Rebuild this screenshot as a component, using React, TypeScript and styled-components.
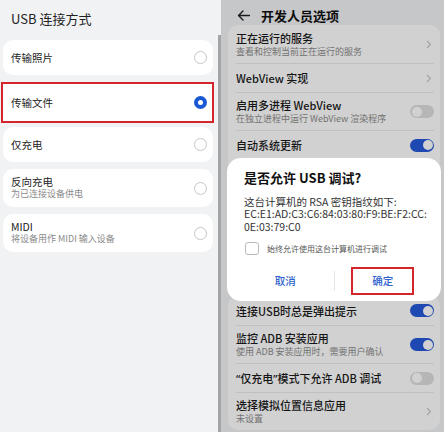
import React from "react";
import styled, { createGlobalStyle, css } from "styled-components";

const GlobalStyle = createGlobalStyle`
  html, body { margin: 0; padding: 0; }
  body {
    width: 444px; height: 432px; overflow: hidden;
    font-family: "Noto Sans CJK SC", "Noto Sans", sans-serif;
    background: #f1f2f4;
  }
  * { box-sizing: border-box; }
`;

const Page = styled.div`
  display: flex;
  width: 444px;
  height: 432px;
  overflow: hidden;
`;

/* ---------- left: USB mode ---------- */
const LeftPanel = styled.div`
  width: 221px;
  flex-shrink: 0;
  display: flex;
  background: #f1f2f4;
`;
const LeftContent = styled.div`
  flex: 1;
  display: flex;
  flex-direction: column;
`;
const LeftTitle = styled.div`
  height: 36px;
  padding-left: 11px;
  display: flex;
  align-items: center;
  font-size: 13px;
  color: #222;
`;
const OptionList = styled.div`
  display: flex;
  flex-direction: column;
  gap: 7px;
  padding: 4px 4px 0 3px;
`;
const OptionCard = styled.div<{ $tall?: boolean; $highlight?: boolean }>`
  display: flex;
  align-items: center;
  justify-content: space-between;
  height: ${(p) => (p.$tall ? 38 : 35)}px;
  padding: 0 6px 0 8px;
  background: #fff;
  border-radius: 10px;
  ${(p) =>
    p.$highlight &&
    css`
      height: 41px;
      margin: 0 -1px -3px -2px;
      border: 2px solid #d3252b;
      border-radius: 0;
      padding: 0 5px 0 8px;
    `}
`;
const OptionText = styled.div`
  display: flex;
  flex-direction: column;
`;
const OptionTitle = styled.div`
  font-size: 10.5px;
  line-height: 13px;
  color: #222;
`;
const OptionSub = styled.div`
  font-size: 9px;
  line-height: 12.5px;
  color: #8a8a8a;
`;
const Radio = styled.span<{ $checked?: boolean }>`
  width: 13px;
  height: 13px;
  flex-shrink: 0;
  border-radius: 50%;
  background: #fff;
  border: ${(p) => (p.$checked ? "4px solid #1b58d4" : "1px solid #c6c6c6")};
`;
const ScrollTrack = styled.div`
  width: 4px;
  padding-top: 35px;
  display: flex;
  justify-content: flex-end;
`;
const ScrollThumb = styled.div`
  width: 3px;
  background: #a4a4a6;
`;

/* ---------- right: developer options ---------- */
const RightPanel = styled.div`
  position: relative;
  flex: 1;
  display: flex;
  flex-direction: column;
  background: #f2f3f5;
  overflow: hidden;
`;
const Header = styled.div`
  height: 25px;
  padding: 7px 0 0 16px;
  display: flex;
  align-items: flex-start;
  gap: 11px;
`;
const HeaderTitle = styled.div`
  font-size: 13px;
  line-height: 18px;
  font-weight: 700;
  color: #111;
`;
const BackIcon = styled.svg`
  margin-top: 3px;
`;
const SettingsCard = styled.div<{ $gap?: number }>`
  margin: ${(p) => p.$gap ?? 0}px 4px 0 7px;
  background: #fff;
  border-radius: 10px;
  display: flex;
  flex-direction: column;
`;
const Row = styled.div<{ $tall?: boolean }>`
  height: ${(p) => (p.$tall ? 38 : 29)}px;
  margin: 0 6px 0 8px;
  display: flex;
  align-items: center;
  justify-content: space-between;
  & + & {
    border-top: 1px solid #ebebeb;
  }
`;
const CoveredRows = styled.div`
  height: 134px;
  margin: 0 6px 0 8px;
  border-top: 1px solid #ebebeb;
`;
const RowText = styled.div`
  display: flex;
  flex-direction: column;
`;
const RowTitle = styled.div`
  font-size: 11px;
  line-height: 14px;
  font-weight: 500;
  color: #1a1a1a;
  white-space: nowrap;
`;
const Quote = styled.span`
  font-family: "Noto Sans", "DejaVu Sans", sans-serif;
`;
const RowSub = styled.div`
  font-size: 9px;
  line-height: 13px;
  color: #8c8c8c;
  white-space: nowrap;
`;
const Toggle = styled.span<{ $on?: boolean }>`
  position: relative;
  width: 24px;
  height: 13px;
  flex-shrink: 0;
  border-radius: 7px;
  background: ${(p) => (p.$on ? "#2559d9" : "#dedede")};
  &::after {
    content: "";
    position: absolute;
    top: 1.5px;
    left: ${(p) => (p.$on ? 12.5 : 1.5)}px;
    width: 10px;
    height: 10px;
    border-radius: 50%;
    background: #fff;
  }
`;
const Chevron = () => (
  <svg width="6" height="9" viewBox="0 0 6 9" style={{ marginRight: 2 }}>
    <polyline points="1,1 4.5,4.5 1,8" fill="none" stroke="#c6c6c6" strokeWidth="1.1" />
  </svg>
);

const Dim = styled.div`
  position: absolute;
  inset: 0;
  background: rgba(0, 0, 0, 0.18);
`;
const Dialog = styled.div`
  position: absolute;
  left: 6px;
  top: 158px;
  width: 214px;
  height: 143px;
  background: #fff;
  border-radius: 14px;
  display: flex;
  flex-direction: column;
  padding-top: 11px;
`;
const DialogTitle = styled.div`
  padding-left: 17px;
  font-size: 13px;
  line-height: 18px;
  font-weight: 700;
  color: #111;
`;
const DialogBody = styled.div`
  margin-top: 8.5px;
  padding-left: 17px;
  font-size: 10.5px;
  line-height: 12.5px;
  color: #333;
  white-space: nowrap;
`;
const CheckRow = styled.div`
  margin-top: 9px;
  padding-left: 18px;
  display: flex;
  align-items: center;
  gap: 8px;
`;
const CheckBox = styled.span`
  width: 14px;
  height: 13px;
  border: 1.2px solid #b9b9b9;
  border-radius: 3px;
`;
const CheckLabel = styled.span`
  font-size: 8px;
  color: #555;
`;
const ButtonRow = styled.div`
  margin-top: 11.5px;
  height: 28px;
  padding: 0 10px;
  display: flex;
  align-items: center;
`;
const ButtonCell = styled.div`
  flex: 1;
  display: flex;
  justify-content: center;
`;
const DialogButton = styled.div<{ $highlight?: boolean }>`
  width: 63px;
  height: 28px;
  display: flex;
  align-items: center;
  justify-content: center;
  font-size: 10.5px;
  font-weight: 500;
  color: #2e62cc;
  border: 2px solid ${(p) => (p.$highlight ? "#d3252b" : "transparent")};
`;
const ButtonDivider = styled.div`
  width: 1px;
  height: 20px;
  background: #e6e6e6;
`;

export default function App() {
  return (
    <Page>
      <GlobalStyle />
      <LeftPanel>
        <LeftContent>
          <LeftTitle>USB 连接方式</LeftTitle>
          <OptionList>
            <OptionCard>
              <OptionTitle>传输照片</OptionTitle>
              <Radio />
            </OptionCard>
            <OptionCard $highlight>
              <OptionTitle>传输文件</OptionTitle>
              <Radio $checked />
            </OptionCard>
            <OptionCard>
              <OptionTitle>仅充电</OptionTitle>
              <Radio />
            </OptionCard>
            <OptionCard $tall>
              <OptionText>
                <OptionTitle>反向充电</OptionTitle>
                <OptionSub>为已连接设备供电</OptionSub>
              </OptionText>
              <Radio />
            </OptionCard>
            <OptionCard $tall>
              <OptionText>
                <OptionTitle>MIDI</OptionTitle>
                <OptionSub>将设备用作 MIDI 输入设备</OptionSub>
              </OptionText>
              <Radio />
            </OptionCard>
          </OptionList>
        </LeftContent>
        <ScrollTrack>
          <ScrollThumb />
        </ScrollTrack>
      </LeftPanel>

      <RightPanel>
        <Header>
          <BackIcon width="13" height="11" viewBox="0 0 13 11">
            <path d="M12.5 5.5H1.5M6 1L1.5 5.5L6 10" fill="none" stroke="#222" strokeWidth="1.4" strokeLinecap="round" strokeLinejoin="round" />
          </BackIcon>
          <HeaderTitle>开发人员选项</HeaderTitle>
        </Header>
        <SettingsCard>
          <Row $tall>
            <RowText>
              <RowTitle>正在运行的服务</RowTitle>
              <RowSub>查看和控制当前正在运行的服务</RowSub>
            </RowText>
            <Chevron />
          </Row>
          <Row>
            <RowTitle>WebView 实现</RowTitle>
            <Chevron />
          </Row>
          <Row $tall>
            <RowText>
              <RowTitle>启用多进程 WebView</RowTitle>
              <RowSub>在独立进程中运行 WebView 渲染程序</RowSub>
            </RowText>
            <Toggle />
          </Row>
          <Row>
            <RowTitle>自动系统更新</RowTitle>
            <Toggle $on />
          </Row>
          <CoveredRows />
        </SettingsCard>
        <SettingsCard $gap={3}>
          <Row>
            <RowTitle>连接USB时总是弹出提示</RowTitle>
            <Toggle $on />
          </Row>
          <Row $tall>
            <RowText>
              <RowTitle>监控 ADB 安装应用</RowTitle>
              <RowSub>使用 ADB 安装应用时，需要用户确认</RowSub>
            </RowText>
            <Toggle $on />
          </Row>
          <Row>
            <RowTitle>
              <Quote>“</Quote>仅充电<Quote>”</Quote>模式下允许 ADB 调试
            </RowTitle>
            <Toggle />
          </Row>
          <Row $tall>
            <RowText>
              <RowTitle>选择模拟位置信息应用</RowTitle>
              <RowSub>未设置</RowSub>
            </RowText>
            <Chevron />
          </Row>
        </SettingsCard>

        <Dim />
        <Dialog>
          <DialogTitle>是否允许 USB 调试?</DialogTitle>
          <DialogBody>
            这台计算机的 RSA 密钥指纹如下:
            <br />
            EC:E1:AD:C3:C6:84:03:80:F9:BE:F2:CC:
            <br />
            0E:03:79:C0
          </DialogBody>
          <CheckRow>
            <CheckBox />
            <CheckLabel>始终允许使用这台计算机进行调试</CheckLabel>
          </CheckRow>
          <ButtonRow>
            <ButtonCell>
              <DialogButton>取消</DialogButton>
            </ButtonCell>
            <ButtonDivider />
            <ButtonCell>
              <DialogButton $highlight>确定</DialogButton>
            </ButtonCell>
          </ButtonRow>
        </Dialog>
      </RightPanel>
    </Page>
  );
}
